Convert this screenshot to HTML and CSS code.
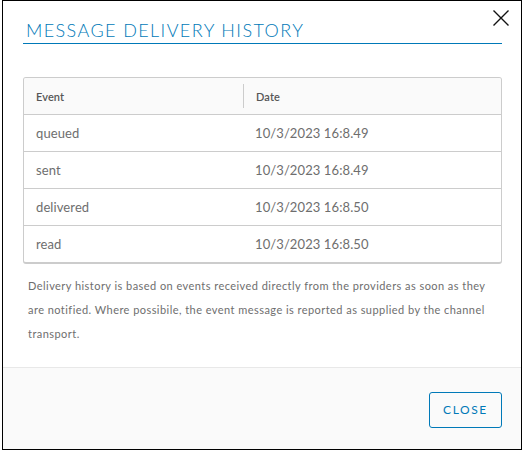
FILE: index.html
```html
<!DOCTYPE html>
<html>
<head>
<meta charset="utf-8">
<link rel="stylesheet" href="styles.css">
</head>
<body>
<div class="modal">
  <div class="modal-header">
    <h3 class="modal-title">MESSAGE DELIVERY HISTORY</h3>
    <button class="close-x" aria-label="Close">
      <svg width="16" height="16" viewBox="0 0 16 16"><path d="M0.5 0.5 L15.5 15.5 M15.5 0.5 L0.5 15.5" stroke="#111" stroke-width="1.4" fill="none"/></svg>
    </button>
  </div>
  <div class="modal-body">
    <div class="datagrid">
      <div class="row head">
        <div class="cell">Event</div>
        <div class="cell sep">Date</div>
      </div>
      <div class="row">
        <div class="cell">queued</div>
        <div class="cell">10/3/2023 16:8.49</div>
      </div>
      <div class="row">
        <div class="cell">sent</div>
        <div class="cell">10/3/2023 16:8.49</div>
      </div>
      <div class="row">
        <div class="cell">delivered</div>
        <div class="cell">10/3/2023 16:8.50</div>
      </div>
      <div class="row last">
        <div class="cell">read</div>
        <div class="cell">10/3/2023 16:8.50</div>
      </div>
    </div>
    <p class="note">Delivery history is based on events received directly from the providers as soon as they are notified. Where possibile, the event message is reported as supplied by the channel transport.</p>
  </div>
  <div class="modal-footer">
    <button class="btn">CLOSE</button>
  </div>
</div>
</body>
</html>
```

FILE: styles.css
```css
html, body {
  margin: 0;
  padding: 0;
  background: #fff;
}
body {
  font-family: Lato, "Open Sans", "Liberation Sans", sans-serif;
}
.modal {
  margin-left: 2px;
  width: 518px;
  height: 448px;
  border: 1px solid #000;
  display: flex;
  flex-direction: column;
  background: #fff;
  position: relative;
}
.modal-header {
  padding: 19px 19px 0 20px;
}
.modal-title {
  margin: 0;
  padding: 0 0 3px 3px;
  border-bottom: 1px solid #0079b8;
  font-weight: 300;
  font-size: 18px;
  line-height: 20px;
  letter-spacing: 1.4px;
  color: #0079b8;
}
.close-x {
  position: absolute;
  top: 9px;
  right: 12px;
  width: 16px;
  height: 16px;
  padding: 0;
  border: 0;
  background: none;
  display: flex;
}
.modal-body {
  padding: 33px 19px 0 20px;
  flex: 1;
}
.datagrid {
  border: 1px solid #ccc;
  border-bottom: 2px solid #ccc;
  border-radius: 3px;
  overflow: hidden;
}
.row {
  display: grid;
  grid-template-columns: 219px 1fr;
  height: 36px;
  align-items: center;
  border-bottom: 1px solid #ccc;
  font-size: 13px;
  color: #6e6e6e;
  letter-spacing: 0.1px;
}
.row.last { border-bottom: 0; }
.row.head {
  background: #fafafa;
  font-size: 11px;
  font-weight: 600;
  color: #565656;
}
.cell {
  padding-left: 12px;
  height: 100%;
  display: flex;
  align-items: center;
}
.cell.sep {
  border-left: 1px solid #ccc;
  height: 24px;
}
.note {
  margin: 10px 6px 0 5px;
  font-size: 11px;
  line-height: 24px;
  letter-spacing: 0.45px;
  color: #6e6e6e;
}
.modal-footer {
  height: 81px;
  background: #fafafa;
  border-top: 1px solid #e8e8e8;
  display: flex;
  align-items: center;
  justify-content: flex-end;
  padding-right: 19px;
}
.btn {
  width: 73px;
  height: 36px;
  border: 1px solid #0079b8;
  border-radius: 3px;
  background: transparent;
  color: #0079b8;
  font-family: Lato, "Open Sans", sans-serif;
  font-size: 12px;
  letter-spacing: 1.6px;
  padding: 0;
  margin-top: 2px;
}
```
